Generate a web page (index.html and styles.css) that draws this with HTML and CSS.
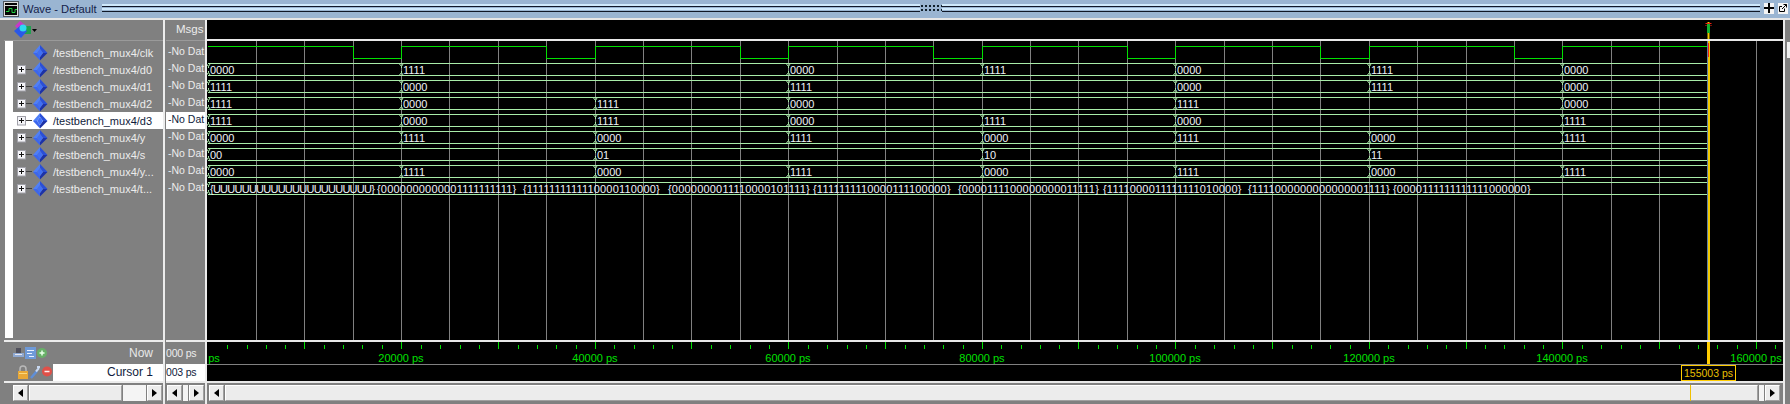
FILE: index.html
```html
<!DOCTYPE html>
<html lang="en">
<head>
<meta charset="utf-8">
<title>Wave - Default</title>
<link rel="stylesheet" href="styles.css">
</head>
<body>
<svg class="defs" width="0" height="0" aria-hidden="true">
  <defs>
    <symbol id="sig" viewBox="0 0 16 16">
      <path fill="#4f7ff8" d="M8 0 L1 8 L5 8 L8 4Z"/>
      <path fill="#2a4fd8" d="M8 0 L15.500 8 L11 8 L8 4Z"/>
      <path fill="#3b66ee" d="M1 8 L8 15.500 L8 12 L5 8Z"/>
      <path fill="#1c32a8" d="M15.500 8 L8 15.500 L8 12 L11 8Z"/>
      <path fill="#3f6ef6" d="M8 4 L11 8 L8 12 L5 8Z"/>
    </symbol>
    <symbol id="exp" viewBox="0 0 15 10">
      <rect x=".5" y=".5" width="8" height="8.500" fill="#f4f4f8" stroke="#a0a0a8"/>
      <path stroke="#101010" fill="none" d="M2 4.500H7M4.500 2V7"/>
      <path stroke="#404040" fill="none" d="M9 4.500H15"/>
    </symbol>
    <path id="tr" fill="none" stroke="#a8eca8" d="M-1.500 1L.5 3.500V5M2 1L.5 3.500M-1.500 12L.5 9.500V8M2 12L.5 9.500"/>
  </defs>
</svg>

<div class="window">
  <header class="titlebar">
    <svg class="app-icon" width="16" height="16" viewBox="0 0 16 16">
      <rect width="16" height="16" fill="#e0e0e0"/>
      <rect x=".5" y=".5" width="15" height="15" fill="none" stroke="#505860"/>
      <rect x="2" y="2" width="12" height="12" fill="#050505"/>
      <path stroke="#d8d8d8" d="M2 4.500H14"/>
      <path stroke="#20d040" fill="none" d="M3 10.500H6V7.500H9V11.500H12V8.500H14"/>
    </svg>
    <span class="title-text">Wave - Default</span>
    <div class="groove"></div>
    <div class="grip"></div>
    <div class="groove"></div>
    <div class="win-btn">
      <svg width="10" height="10" viewBox="0 0 10 10"><path stroke="#000" stroke-width="2" d="M5 0V10M0 5H10"/></svg>
    </div>
    <div class="win-btn">
      <svg width="10" height="10" viewBox="0 0 10 10"><path stroke="#000" fill="none" d="M1.500 3.500V8.500H6.500V5.500M1.500 3.500H4M4 6L8.500 1.500M5.500 1.500H8.500V4.500"/></svg>
    </div>
  </header>

  <main class="panes">
    <section class="pane names">
      <div class="head head-names">
        <svg width="24" height="17" viewBox="0 0 24 17">
          <path fill="#c838c8" d="M7 0L12 4L6 9L2 5Z"/>
          <rect x="11" y="5" width="7" height="8" fill="#20a050"/>
          <path fill="#2a58e8" d="M8 4L14 10L8 17L1 10Z"/>
          <circle cx="10" cy="7" r="3.500" fill="#30d8f0"/>
          <path fill="#000" d="M19 8H24L21.500 11Z"/>
        </svg>
      </div>
      <div class="rows">
        <div class="row"><span class="tree"><svg class="ic-sig" width="16" height="16"><use href="#sig"/></svg></span><span class="label">/testbench_mux4/clk</span></div>
        <div class="row"><span class="tree"><svg class="ic-exp" width="15" height="10"><use href="#exp"/></svg><svg class="ic-sig" width="16" height="16"><use href="#sig"/></svg></span><span class="label">/testbench_mux4/d0</span></div>
        <div class="row"><span class="tree"><svg class="ic-exp" width="15" height="10"><use href="#exp"/></svg><svg class="ic-sig" width="16" height="16"><use href="#sig"/></svg></span><span class="label">/testbench_mux4/d1</span></div>
        <div class="row"><span class="tree"><svg class="ic-exp" width="15" height="10"><use href="#exp"/></svg><svg class="ic-sig" width="16" height="16"><use href="#sig"/></svg></span><span class="label">/testbench_mux4/d2</span></div>
        <div class="row selected"><span class="tree"><svg class="ic-exp" width="15" height="10"><use href="#exp"/></svg><svg class="ic-sig" width="16" height="16"><use href="#sig"/></svg></span><span class="label">/testbench_mux4/d3</span></div>
        <div class="row"><span class="tree"><svg class="ic-exp" width="15" height="10"><use href="#exp"/></svg><svg class="ic-sig" width="16" height="16"><use href="#sig"/></svg></span><span class="label">/testbench_mux4/y</span></div>
        <div class="row"><span class="tree"><svg class="ic-exp" width="15" height="10"><use href="#exp"/></svg><svg class="ic-sig" width="16" height="16"><use href="#sig"/></svg></span><span class="label">/testbench_mux4/s</span></div>
        <div class="row"><span class="tree"><svg class="ic-exp" width="15" height="10"><use href="#exp"/></svg><svg class="ic-sig" width="16" height="16"><use href="#sig"/></svg></span><span class="label">/testbench_mux4/y...</span></div>
        <div class="row"><span class="tree"><svg class="ic-exp" width="15" height="10"><use href="#exp"/></svg><svg class="ic-sig" width="16" height="16"><use href="#sig"/></svg></span><span class="label">/testbench_mux4/t...</span></div>
      </div>
      <div class="sep"></div>
      <div class="now-row">
        <svg class="tool-icons" width="36" height="14" viewBox="0 0 36 14">
          <path fill="#8fa8d0" d="M0 7H11V11H0Z"/>
          <path fill="#50505c" d="M3 2H8V7H3Z"/>
          <path fill="#e8e8f0" d="M2 8H9V9H2Z"/>
          <rect x="12" y="1" width="11" height="12" fill="#6f9ad8"/>
          <path stroke="#e8f0ff" d="M14 4.500H21M14 7.500H19M16 10.500H21"/>
          <circle cx="29" cy="7" r="5" fill="#68b068"/>
          <path stroke="#e8ffe8" stroke-width="1.500" d="M26.500 7H31.500M29 4.500V9.500"/>
        </svg>
        <span class="now-label">Now</span>
      </div>
      <div class="cursor-row">
        <svg class="cursor-icons" width="36" height="15" viewBox="0 0 36 15">
          <path fill="none" stroke="#b8b8b8" stroke-width="1.500" d="M3 7V4A3 3 0 0 1 9 4V7"/>
          <rect x="1" y="6" width="10" height="8" fill="#e8a838"/>
          <path stroke="#f8d880" d="M2 8.500H10"/>
          <path stroke="#5f8fd8" stroke-width="2.500" d="M14 13L20 6"/>
          <path stroke="#c8d8f0" stroke-width="2" fill="none" d="M19 6.500L22 3M20 2L23 2"/>
          <circle cx="30" cy="6.500" r="5" fill="#e05048"/>
          <path stroke="#fff0f0" stroke-width="1.500" d="M27.500 6.500H32.500"/>
        </svg>
        <span class="cursor-label">Cursor 1</span>
      </div>
      <div class="sep"></div>
      <div class="sb">
        <div class="sb-btn"><i class="tri-l"></i></div>
        <div class="sb-thumb thumb-names"></div>
        <div class="sb-hatch"></div>
        <div class="sb-btn"><i class="tri-r"></i></div>
      </div>
    </section>

    <section class="pane values">
      <div class="head head-values">Msgs</div>
      <div class="rows">
        <div class="val">-No Dat</div>
        <div class="val">-No Dat</div>
        <div class="val">-No Dat</div>
        <div class="val">-No Dat</div>
        <div class="val selected">-No Dat</div>
        <div class="val">-No Dat</div>
        <div class="val">-No Dat</div>
        <div class="val">-No Dat</div>
        <div class="val">-No Dat</div>
      </div>
      <div class="sep"></div>
      <div class="now-value">000 ps</div>
      <div class="cursor-value">003 ps</div>
      <div class="sep"></div>
      <div class="sb">
        <div class="sb-btn"><i class="tri-l"></i></div>
        <div class="sb-hatch"></div>
        <div class="sb-btn"><i class="tri-r"></i></div>
      </div>
    </section>

    <section class="pane wave">
      <svg class="wave-svg" width="1576" height="363" viewBox="207 20 1576 363">
        <rect x="207" y="20" width="1576" height="363" fill="#000"/>
        <rect x="207" y="39" width="1576" height="2" fill="#e8e8e8"/>
        <rect x="207" y="340" width="1576" height="2" fill="#e8e8e8"/>
        <rect x="207" y="364" width="1576" height="1" fill="#808080"/>
        <rect x="207" y="381" width="1576" height="2" fill="#e8e8e8"/>

        <path class="grid" d="M256.500 41V340M304.500 41V340M353.500 41V340M401.500 41V340M449.500 41V340M498.500 41V340M546.500 41V340M595.500 41V340M643.500 41V340M691.500 41V340M740.500 41V340M788.500 41V340M837.500 41V340M885.500 41V340M933.500 41V340M982.500 41V340M1030.500 41V340M1078.500 41V340M1127.500 41V340M1175.500 41V340M1224.500 41V340M1272.500 41V340M1320.500 41V340M1369.500 41V340M1417.500 41V340M1466.500 41V340M1514.500 41V340M1562.500 41V340M1611.500 41V340M1659.500 41V340M1756.500 41V340"/>

        <path class="clock" d="M208 46.500H353.500V58.500H401.500V46.500H546.500V58.500H595.500V46.500H740.500V58.500H788.500V46.500H933.500V58.500H982.500V46.500H1127.500V58.500H1175.500V46.500H1320.500V58.500H1369.500V46.500H1514.500V58.500H1562.500V46.500H1707"/>

        <g class="bus" transform="translate(0 63)">
          <path class="rail" d="M208 .5H1707M208 12.500H1707"/>
          <use href="#tr" x="208"/><use href="#tr" x="401"/><use href="#tr" x="788"/><use href="#tr" x="982"/><use href="#tr" x="1175"/><use href="#tr" x="1369"/><use href="#tr" x="1562"/>
          <text x="210" y="11">0000</text><text x="403" y="11">1111</text><text x="790" y="11">0000</text><text x="984" y="11">1111</text><text x="1177" y="11">0000</text><text x="1371" y="11">1111</text><text x="1564" y="11">0000</text>
        </g>
        <g class="bus" transform="translate(0 80)">
          <path class="rail" d="M208 .5H1707M208 12.500H1707"/>
          <use href="#tr" x="208"/><use href="#tr" x="401"/><use href="#tr" x="788"/><use href="#tr" x="1175"/><use href="#tr" x="1369"/><use href="#tr" x="1562"/>
          <text x="210" y="11">1111</text><text x="403" y="11">0000</text><text x="790" y="11">1111</text><text x="1177" y="11">0000</text><text x="1371" y="11">1111</text><text x="1564" y="11">0000</text>
        </g>
        <g class="bus" transform="translate(0 97)">
          <path class="rail" d="M208 .5H1707M208 12.500H1707"/>
          <use href="#tr" x="208"/><use href="#tr" x="401"/><use href="#tr" x="595"/><use href="#tr" x="788"/><use href="#tr" x="1175"/><use href="#tr" x="1562"/>
          <text x="210" y="11">1111</text><text x="403" y="11">0000</text><text x="597" y="11">1111</text><text x="790" y="11">0000</text><text x="1177" y="11">1111</text><text x="1564" y="11">0000</text>
        </g>
        <g class="bus" transform="translate(0 114)">
          <path class="rail" d="M208 .5H1707M208 12.500H1707"/>
          <use href="#tr" x="208"/><use href="#tr" x="401"/><use href="#tr" x="595"/><use href="#tr" x="788"/><use href="#tr" x="982"/><use href="#tr" x="1175"/><use href="#tr" x="1562"/>
          <text x="210" y="11">1111</text><text x="403" y="11">0000</text><text x="597" y="11">1111</text><text x="790" y="11">0000</text><text x="984" y="11">1111</text><text x="1177" y="11">0000</text><text x="1564" y="11">1111</text>
        </g>
        <g class="bus" transform="translate(0 131)">
          <path class="rail" d="M208 .5H1707M208 12.500H1707"/>
          <use href="#tr" x="208"/><use href="#tr" x="401"/><use href="#tr" x="595"/><use href="#tr" x="788"/><use href="#tr" x="982"/><use href="#tr" x="1175"/><use href="#tr" x="1369"/><use href="#tr" x="1562"/>
          <text x="210" y="11">0000</text><text x="403" y="11">1111</text><text x="597" y="11">0000</text><text x="790" y="11">1111</text><text x="984" y="11">0000</text><text x="1177" y="11">1111</text><text x="1371" y="11">0000</text><text x="1564" y="11">1111</text>
        </g>
        <g class="bus" transform="translate(0 148)">
          <path class="rail" d="M208 .5H1707M208 12.500H1707"/>
          <use href="#tr" x="208"/><use href="#tr" x="595"/><use href="#tr" x="982"/><use href="#tr" x="1369"/>
          <text x="210" y="11">00</text><text x="597" y="11">01</text><text x="984" y="11">10</text><text x="1371" y="11">11</text>
        </g>
        <g class="bus" transform="translate(0 165)">
          <path class="rail" d="M208 .5H1707M208 12.500H1707"/>
          <use href="#tr" x="208"/><use href="#tr" x="401"/><use href="#tr" x="595"/><use href="#tr" x="788"/><use href="#tr" x="982"/><use href="#tr" x="1175"/><use href="#tr" x="1369"/><use href="#tr" x="1562"/>
          <text x="210" y="11">0000</text><text x="403" y="11">1111</text><text x="597" y="11">0000</text><text x="790" y="11">1111</text><text x="984" y="11">0000</text><text x="1177" y="11">1111</text><text x="1371" y="11">0000</text><text x="1564" y="11">1111</text>
        </g>
        <g class="bus" transform="translate(0 182)">
          <path class="rail" d="M208 .5H1707M208 12.500H1707"/>
          <use href="#tr" x="208"/>
          <text class="undef" x="210" y="11">{UUUUUUUUUUUUUUUUUUUUUU}</text>
          <text class="vec" x="377" y="11">{0000000000001111111111}</text>
          <text class="vec" x="523" y="11">{1111111111110000110000}</text>
          <text class="vec" x="668" y="11">{0000000011110000101111}</text>
          <text class="vec" x="813" y="11">{1111111110000111100000}</text>
          <text class="vec" x="958" y="11">{0000111100000000011111}</text>
          <text class="vec" x="1103" y="11">{1111000011111111010000}</text>
          <text class="vec" x="1248" y="11">{1111000000000000001111}</text>
          <text class="vec" x="1393" y="11">{0000111111111111000000}</text>
        </g>

        <path class="cur-shadow" d="M1707.500 41V340"/>
        <path class="cur-yellow" d="M1709 41V340"/>
        <path class="cur-red" d="M1708.500 43V57"/>
        <path class="cur-yellow" d="M1708.500 22V39" stroke-width="3"/>
        <path class="cur-green" d="M1708.500 24V33"/>
        <path class="cur-red" d="M1705.500 23.500H1711.500M1705.500 25.500H1706.500M1710.500 25.500H1711.500"/>

        <path class="tick" d="M227.500 345V349M247.500 345V349M266.500 345V349M285.500 345V349M324.500 345V349M343.500 345V349M362.500 345V349M382.500 345V349M421.500 345V349M440.500 345V349M460.500 345V349M479.500 345V349M518.500 345V349M537.500 345V349M556.500 345V349M576.500 345V349M614.500 345V349M634.500 345V349M653.500 345V349M672.500 345V349M711.500 345V349M730.500 345V349M750.500 345V349M769.500 345V349M808.500 345V349M827.500 345V349M847.500 345V349M866.500 345V349M905.500 345V349M924.500 345V349M943.500 345V349M963.500 345V349M1001.500 345V349M1021.500 345V349M1040.500 345V349M1059.500 345V349M1098.500 345V349M1117.500 345V349M1137.500 345V349M1156.500 345V349M1195.500 345V349M1214.500 345V349M1234.500 345V349M1253.500 345V349M1292.500 345V349M1311.500 345V349M1330.500 345V349M1350.500 345V349M1388.500 345V349M1408.500 345V349M1427.500 345V349M1446.500 345V349M1485.500 345V349M1504.500 345V349M1524.500 345V349M1543.500 345V349M1582.500 345V349M1601.500 345V349M1621.500 345V349M1640.500 345V349M1679.500 345V349M1698.500 345V349M1717.500 345V349M1737.500 345V349M1775.500 345V349"/>
        <path class="tick" d="M304.500 342V349M401.500 342V349M498.500 342V349M595.500 342V349M691.500 342V349M788.500 342V349M885.500 342V349M982.500 342V349M1078.500 342V349M1175.500 342V349M1272.500 342V349M1369.500 342V349M1466.500 342V349M1562.500 342V349M1659.500 342V349M1756.500 342V349"/>
        <g class="ruler-text">
          <text x="214" y="362">ps</text>
          <text x="401" y="362">20000 ps</text>
          <text x="595" y="362">40000 ps</text>
          <text x="788" y="362">60000 ps</text>
          <text x="982" y="362">80000 ps</text>
          <text x="1175" y="362">100000 ps</text>
          <text x="1369" y="362">120000 ps</text>
          <text x="1562" y="362">140000 ps</text>
          <text x="1756" y="362">160000 ps</text>
        </g>
        <rect x="1707" y="342" width="3" height="22" fill="#ffcc00"/>
        <rect class="cursor-box" x="1681.500" y="365.500" width="54" height="15"/>
        <text class="cursor-time" x="1708.500" y="377">155003 ps</text>
      </svg>
      <div class="sb sb-wave">
        <div class="sb-btn"><i class="tri-l"></i></div>
        <div class="sb-thumb thumb-wave"><span class="sb-mark"></span></div>
        <div class="sb-hatch"></div>
        <div class="sb-btn"><i class="tri-r"></i></div>
      </div>
    </section>
    <div class="sliver"></div>
  </main>
</div>
</body>
</html>
```

FILE: styles.css
```css
* { box-sizing: border-box; }
html, body { margin: 0; padding: 0; }
body {
  width: 1790px;
  height: 404px;
  overflow: hidden;
  background: #808080;
  font-family: "Liberation Sans", Arial, sans-serif;
}
.defs { display: block; height: 0; }
.window { display: flex; flex-direction: column; width: 1790px; height: 404px; }

.titlebar {
  display: flex;
  align-items: center;
  height: 20px;
  flex: none;
  background: #9ab5d2;
  border-bottom: 2px solid #e6e6e6;
  padding-left: 3px;
}
.app-icon { flex: none; }
.title-text {
  width: 83px;
  padding-left: 4px;
  flex: none;
  color: #14224a;
  font-size: 11.2px;
  white-space: nowrap;
}
.groove {
  flex: 1;
  height: 8px;
  margin-top: -2px;
  background: linear-gradient(to bottom,
    #cfe9fb 0, #cfe9fb 2px, #101828 2px, #101828 3px, #9ab5d2 3px, #9ab5d2 4px,
    #cfe9fb 4px, #cfe9fb 6px, #9ab5d2 6px, #9ab5d2 7px, #101828 7px, #101828 8px);
}
.grip {
  flex: none;
  width: 22px;
  height: 9px;
  margin-top: -2px;
  background-color: #9ab5d2;
  background-image: radial-gradient(circle, #10202c 0.8px, rgba(0,0,0,0) 1px);
  background-size: 4px 4px;
}
.win-btn {
  flex: none;
  width: 10px;
  height: 11px;
  margin-left: 4px;
  margin-top: -2px;
  display: flex;
  align-items: center;
  justify-content: center;
  background: #f4f4f4;
}
.win-btn:last-child { margin-right: 2px; }

.panes { display: flex; flex: 1; min-height: 0; }
.pane { display: flex; flex-direction: column; flex: none; overflow: hidden; }
.names { width: 161px; margin-left: 4px; margin-right: 1px; border-right: 2px solid #ececec; }
.values { width: 41px; border-right: 2px solid #ececec; }
.wave { width: 1578px; border-right: 2px solid #ececec; }
.sliver { flex: 1; margin: 22px 0 0 2px; height: 16px; background: #f0f0f0; }

.head { height: 21px; flex: none; color: #ececec; font-size: 11.5px; border-bottom: 1px solid #9a9a9a; }
.head-names { padding: 1px 0 0 9px; }
.head-values { padding: 3px 0 0 10px; }

.rows { height: 299px; flex: none; padding-top: 3px; overflow: hidden; }
.names .rows {
  margin-left: 1px;
  padding-left: 8px;
  background: linear-gradient(#fff, #fff) no-repeat 0 0 / 8px 297px;
}
.row {
  display: flex;
  align-items: center;
  height: 17px;
  color: #ececec;
  font-size: 11px;
  white-space: nowrap;
}
.row.selected { background: #fff; color: #101c3c; margin-left: -8px; padding-left: 8px; }
.tree {
  display: flex;
  align-items: center;
  justify-content: flex-end;
  flex: none;
  width: 35px;
}
.ic-exp { flex: none; }
.ic-sig { flex: none; }
.label { margin-left: 5px; }
.val {
  height: 17px;
  padding: 0 0 0 2px;
  line-height: 15px;
  color: #ececec;
  font-size: 10.5px;
  white-space: nowrap;
  overflow: hidden;
}
.val.selected { background: #fff; color: #101c3c; }

.sep { height: 2px; flex: none; background: #ececec; }
.now-row {
  display: flex;
  align-items: center;
  justify-content: space-between;
  height: 22px;
  flex: none;
  padding: 0 10px 0 9px;
  color: #e8e8e8;
  font-size: 12px;
}
.cursor-row {
  display: flex;
  align-items: stretch;
  height: 17px;
  flex: none;
  padding-left: 13px;
}
.cursor-icons { flex: none; align-self: center; }
.cursor-label {
  flex: 1;
  background: #fff;
  color: #101c3c;
  font-size: 12px;
  line-height: 17px;
  text-align: right;
  padding-right: 10px;
}
.now-value, .cursor-value {
  flex: none;
  font-size: 10.5px;
  letter-spacing: -0.2px;
  text-align: right;
  padding-right: 9px;
  white-space: nowrap;
}
.now-value { height: 22px; line-height: 22px; color: #ececec; }
.cursor-value { height: 17px; line-height: 17px; background: #fff; color: #101c3c; }

.sb { display: flex; height: 16px; flex: none; margin-top: 2px; gap: 1px; }
.names .sb { padding: 0 1px 0 9px; }
.values .sb { padding: 0 1px; }
.sb-wave { padding: 0 3px 0 2px; }
.sb-btn {
  flex: none;
  width: 15px;
  display: flex;
  align-items: center;
  justify-content: center;
  background: #ececec;
  border-top: 1px solid #fff;
  border-left: 1px solid #fff;
  border-right: 1px solid #a0a0a0;
  border-bottom: 1px solid #a0a0a0;
}
.tri-l { width: 0; height: 0; border: 4px solid transparent; border-left-width: 0; border-right: 5px solid #000; }
.tri-r { width: 0; height: 0; border: 4px solid transparent; border-right-width: 0; border-left: 5px solid #000; }
.sb-thumb {
  position: relative;
  background: #ececec;
  border-top: 1px solid #fff;
  border-left: 1px solid #fff;
  border-right: 1px solid #a0a0a0;
  border-bottom: 1px solid #a0a0a0;
}
.thumb-names { width: 93px; flex: none; }
.thumb-wave { flex: 1; }
.sb-hatch {
  flex: 1;
  background-color: #f4f4f4;
  background-image: radial-gradient(#d4d4d4 0.5px, rgba(0,0,0,0) 0.6px);
  background-size: 2px 2px;
}
.sb-wave .sb-hatch { flex: none; width: 5px; }
.sb-mark {
  position: absolute;
  top: -1px;
  bottom: -1px;
  left: 1464px;
  width: 1px;
  background: #f0c000;
}

.wave-svg { display: block; flex: none; }
.grid { stroke: #808080; fill: none; }
.clock { stroke: #00e000; fill: none; }
.rail { stroke: #a8eca8; fill: none; }
.bus text {
  fill: #eef2f8;
  font-size: 11px;
  font-family: "Liberation Sans", Arial, sans-serif;
}
.bus text.vec { letter-spacing: 0.2px; }
.bus text.undef { letter-spacing: -0.75px; }
.cur-shadow { stroke: #5f7fa0; fill: none; }
.cur-yellow { stroke: #f0c800; stroke-width: 2; fill: none; }
.cur-red { stroke: #f02010; fill: none; }
.cur-green { stroke: #10b030; stroke-width: 3; fill: none; }
.tick { stroke: #00e000; fill: none; }
.ruler-text text {
  fill: #00e000;
  font-size: 11px;
  text-anchor: middle;
  font-family: "Liberation Sans", Arial, sans-serif;
}
.cursor-box { fill: #000; stroke: #ffcc00; }
.cursor-time {
  fill: #e8c000;
  font-size: 10.5px;
  text-anchor: middle;
  font-family: "Liberation Sans", Arial, sans-serif;
}
```
